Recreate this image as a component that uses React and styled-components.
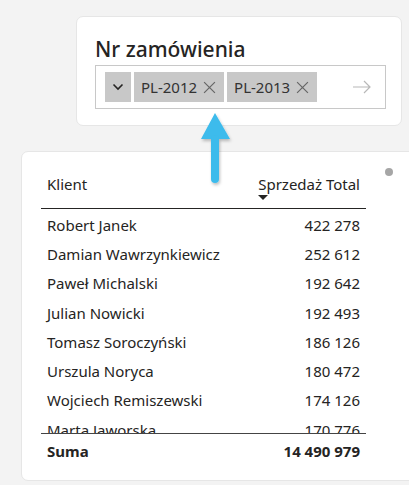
import styled, { createGlobalStyle } from "styled-components";

const GlobalStyle = createGlobalStyle`
  html, body {
    margin: 0;
    padding: 0;
    background: #f3f3f3;
    font-family: "Noto Sans", "Open Sans", sans-serif;
    color: #252423;
  }
`;

const rows = [
  ["Robert Janek", "422 278"],
  ["Damian Wawrzynkiewicz", "252 612"],
  ["Paweł Michalski", "192 642"],
  ["Julian Nowicki", "192 493"],
  ["Tomasz Soroczyński", "186 126"],
  ["Urszula Noryca", "180 472"],
  ["Wojciech Remiszewski", "174 126"],
  ["Marta Jaworska", "170 776"],
];

const App = () => {
  return (
    <Page>
      <GlobalStyle />
      <SlicerCard>
        <SlicerTitle>Nr zamówienia</SlicerTitle>
        <SlicerBox>
          <ChevronButton>
            <svg width="12" height="8" viewBox="0 0 12 8">
              <path d="M1.5 1.5 L6 6 L10.5 1.5" fill="none" stroke="#252423" strokeWidth="1.6" />
            </svg>
          </ChevronButton>
          <Chip>
            PL-2012
            <svg width="13" height="13" viewBox="0 0 12 12">
              <path d="M1 1 L11 11 M11 1 L1 11" stroke="#666" strokeWidth="1.1" />
            </svg>
          </Chip>
          <Chip>
            PL-2013
            <svg width="13" height="13" viewBox="0 0 12 12">
              <path d="M1 1 L11 11 M11 1 L1 11" stroke="#666" strokeWidth="1.1" />
            </svg>
          </Chip>
          <Arrow>
            <svg width="18" height="14" viewBox="0 0 18 14">
              <path d="M0 7 H17 M11 1 L17 7 L11 13" fill="none" stroke="#b8b8b8" strokeWidth="1.2" />
            </svg>
          </Arrow>
        </SlicerBox>
      </SlicerCard>

      <TableCard>
        <MoreDot />
        <Table>
          <HeaderRow>
            <HeadCell>Klient</HeadCell>
            <HeadCell $right>
              Sprzedaż Total
              <SortMark />
            </HeadCell>
          </HeaderRow>
          <Body>
            {rows.map(([name, value]) => (
              <Row key={name}>
                <Cell>{name}</Cell>
                <Cell $right>{value}</Cell>
              </Row>
            ))}
          </Body>
          <TotalRow>
            <Cell $bold>Suma</Cell>
            <Cell $bold $right>14 490 979</Cell>
          </TotalRow>
        </Table>
      </TableCard>

      <Pointer width="40" height="80" viewBox="0 0 40 80">
        <defs>
          <filter id="sh" x="-50%" y="-50%" width="200%" height="200%">
            <feDropShadow dx="1" dy="2" stdDeviation="1.5" floodColor="#000" floodOpacity="0.25" />
          </filter>
        </defs>
        <g filter="url(#sh)">
          <path d="M20 2 L35 28 L6 28 Z" fill="#3cbbec" />
          <rect x="16" y="24" width="8" height="48" rx="4" fill="#3cbbec" />
        </g>
      </Pointer>
    </Page>
  );
};

const Page = styled.div`
  position: relative;
  width: 409px;
  height: 485px;
  overflow: hidden;
  padding-top: 16px;
  box-sizing: border-box;
  display: flex;
  flex-direction: column;
  gap: 25px;
`;

const SlicerCard = styled.div`
  margin-left: 76px;
  width: 326px;
  height: 110px;
  box-sizing: border-box;
  background: #fff;
  border: 1px solid #e6e6e6;
  border-radius: 7px;
  padding: 18px 0 0 18px;
`;

const SlicerTitle = styled.div`
  font-size: 21px;
  font-weight: 500;
  line-height: 28px;
  color: #252423;
`;

const SlicerBox = styled.div`
  margin-top: 2px;
  width: 291px;
  height: 44px;
  box-sizing: border-box;
  border: 1px solid #c8c8c8;
  display: flex;
  align-items: center;
  gap: 3px;
  padding: 0 14px 0 9px;
`;

const ChevronButton = styled.div`
  width: 26px;
  height: 30px;
  background: #c8c8c8;
  display: flex;
  align-items: center;
  justify-content: center;
`;

const Chip = styled.div`
  height: 30px;
  background: #c8c8c8;
  display: flex;
  align-items: center;
  gap: 6px;
  padding: 0 8px 0 7px;
  font-size: 15px;
  color: #333;
`;

const Arrow = styled.div`
  margin-left: auto;
  display: flex;
  align-items: center;
`;

const TableCard = styled.div`
  position: relative;
  margin-left: 21px;
  width: 400px;
  height: 330px;
  box-sizing: border-box;
  background: #fff;
  border: 1px solid #e6e6e6;
  border-radius: 7px;
  padding: 22px 0 0 19px;
`;

const MoreDot = styled.div`
  position: absolute;
  top: 16px;
  left: 363px;
  width: 8px;
  height: 8px;
  border-radius: 50%;
  background: #a6a6a6;
`;

const Table = styled.div`
  width: 325px;
  font-size: 15px;
`;

const HeaderRow = styled.div`
  display: flex;
  justify-content: space-between;
  height: 34px;
  border-bottom: 1px solid #252423;
`;

const HeadCell = styled.div`
  position: relative;
  padding: 0 6px;
  line-height: 20px;
  text-align: ${({ $right }) => ($right ? "right" : "left")};
  color: #252423;
`;

const SortMark = styled.span`
  position: absolute;
  left: 6px;
  top: 21px;
  width: 0;
  height: 0;
  border-left: 5px solid transparent;
  border-right: 5px solid transparent;
  border-top: 5px solid #252423;
`;

const Body = styled.div`
  height: 225px;
  overflow: hidden;
  padding-top: 1px;
  box-sizing: border-box;
  border-bottom: 1px solid #444;
  display: grid;
  grid-auto-rows: 29.3px;
  align-content: start;
`;

const Row = styled.div`
  display: flex;
  justify-content: space-between;
  align-items: center;
  line-height: 20px;
`;

const Cell = styled.div`
  padding: 0 6px;
  white-space: nowrap;
  font-weight: ${({ $bold }) => ($bold ? 700 : 400)};
  color: #252423;
`;

const TotalRow = styled.div`
  display: flex;
  justify-content: space-between;
  align-items: center;
  height: 34px;
`;

const Pointer = styled.svg`
  position: absolute;
  left: 195px;
  top: 111px;
`;

export default App;
